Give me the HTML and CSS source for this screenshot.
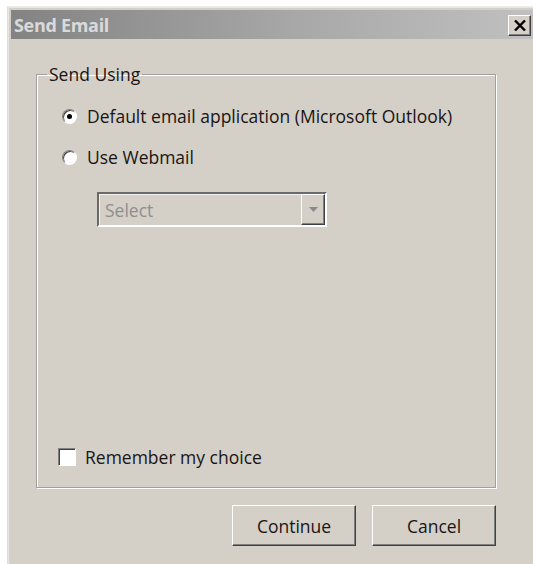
FILE: index.html
```html
<!DOCTYPE html>
<html>
<head>
<meta charset="utf-8">
<title>Send Email</title>
<link rel="stylesheet" href="styles.css">
</head>
<body>
<div class="window">
  <div class="titlebar">
    <span class="title">Send Email</span>
    <button class="close" aria-label="Close">
      <svg width="12" height="11" viewBox="0 0 12 11"><path d="M1 0.5 L11 10.5 M11 0.5 L1 10.5" stroke="#000" stroke-width="2.4" fill="none"/></svg>
    </button>
  </div>
  <div class="content">
    <fieldset class="group">
      <legend class="group-label">Send Using</legend>
      <div class="group-body">
        <label class="option">
          <span class="radio checked"></span>
          <span>Default email application (Microsoft Outlook)</span>
        </label>
        <label class="option">
          <span class="radio"></span>
          <span>Use Webmail</span>
        </label>
        <div class="combo">
          <span class="combo-text">Select</span>
          <span class="combo-btn">
            <svg width="9" height="5" viewBox="0 0 9 5"><path d="M0 0 H9 L4.5 5 Z" fill="#8a8a8a"/></svg>
          </span>
        </div>
        <label class="option remember">
          <span class="checkbox"></span>
          <span>Remember my choice</span>
        </label>
      </div>
    </fieldset>
    <div class="actions">
      <button class="btn">Continue</button>
      <button class="btn">Cancel</button>
    </div>
  </div>
</div>
</body>
</html>
```
FILE: styles.css
```css
html, body {
  margin: 0;
  padding: 0;
  background: #ffffff;
  height: 100%;
}

body {
  font-family: "Open Sans", "Noto Sans", sans-serif;
  font-size: 17.5px;
  color: #1a1414;
  overflow: hidden;
}

/* dialog frame */
.window {
  margin: 6px 0 0 7px;
  height: calc(100% - 6px);
  box-sizing: border-box;
  border-left: 1px solid #cfe6c8;
  border-top: 1px solid #ececec;
  background: #d4d0c8;
  padding: 3px 0 0 3px;
  display: flex;
  flex-direction: column;
  box-shadow: inset 1px 1px 0 #e8e6e2;
}

.titlebar {
  height: 29px;
  background: linear-gradient(to right, #838383, #a8a8a8 55%, #c0c0c0);
  display: flex;
  align-items: center;
  justify-content: space-between;
  padding: 0 2px 0 3px;
}

.title {
  font-weight: 700;
  font-size: 18px;
  color: #dadada;
  letter-spacing: -0.3px;
}

.close {
  width: 23px;
  height: 21px;
  margin-top: 1px;
  padding: 0;
  background: #d4d0c8;
  border: 1px solid;
  border-color: #ffffff #404040 #404040 #ffffff;
  box-shadow: inset -1px -1px 0 #808080;
  display: flex;
  align-items: center;
  justify-content: center;
}

.content {
  flex: 1;
  padding: 23px 37px 0 25px;
}

/* etched group box */
.group {
  margin: 0;
  padding: 0;
  border: 1px solid #a0a0a0;
  box-shadow: 1px 1px 0 #ffffff, inset 1px 1px 0 #ffffff;
  height: 426px;
  box-sizing: border-box;
}

.group-label {
  margin-left: 10px;
  padding: 0 2px;
  line-height: 24px;
}

.group-body {
  display: flex;
  flex-direction: column;
  height: 401px;
  padding-left: 21px;
}

.option {
  display: flex;
  align-items: center;
  gap: 10px;
  line-height: 24px;
}

.option:first-child {
  margin-top: 18px;
  margin-left: 4px;
}

.option:nth-child(2) {
  margin-top: 17px;
  margin-left: 4px;
}

.radio {
  width: 15px;
  height: 15px;
  border-radius: 50%;
  box-sizing: border-box;
  background: #ffffff;
  border: 1px solid;
  border-color: #808080 #ffffff #ffffff #808080;
  box-shadow: inset 1px 1px 0 #404040;
  position: relative;
  flex: none;
}

.radio.checked::after {
  content: "";
  position: absolute;
  left: 4px;
  top: 4px;
  width: 5px;
  height: 5px;
  border-radius: 50%;
  background: #000000;
}

/* disabled drop-down */
.combo {
  margin: 23px 0 0 39px;
  width: 230px;
  height: 35px;
  box-sizing: border-box;
  border: 2px solid;
  border-color: #6a6a6a #ffffff #ffffff #6a6a6a;
  background: #d4d0c8;
  display: flex;
  align-items: center;
  justify-content: space-between;
  box-shadow: inset 1px 1px 0 #f2f0ec;
}

.combo-text {
  color: #8e8e8e;
  padding-left: 6px;
}

.combo-btn {
  width: 24px;
  height: 31px;
  box-sizing: border-box;
  border: 1px solid;
  border-color: #ffffff #404040 #404040 #ffffff;
  box-shadow: inset -1px -1px 0 #808080;
  display: flex;
  align-items: center;
  justify-content: center;
}

.remember {
  margin-top: auto;
  margin-bottom: 18px;
  gap: 9px;
}

.checkbox {
  width: 18px;
  height: 18px;
  box-sizing: border-box;
  background: #ffffff;
  border: 1px solid;
  border-color: #808080 #ffffff #ffffff #808080;
  box-shadow: inset 1px 1px 0 #404040;
  flex: none;
}

.actions {
  display: flex;
  justify-content: flex-end;
  gap: 16px;
  margin-top: 17px;
}

.btn {
  width: 124px;
  height: 41px;
  font-family: inherit;
  font-size: 17.5px;
  color: #1a1414;
  background: #d4d0c8;
  border: 1px solid;
  border-color: #ffffff #404040 #404040 #ffffff;
  box-shadow: inset -1px -1px 0 #808080;
  padding: 0;
}
```
